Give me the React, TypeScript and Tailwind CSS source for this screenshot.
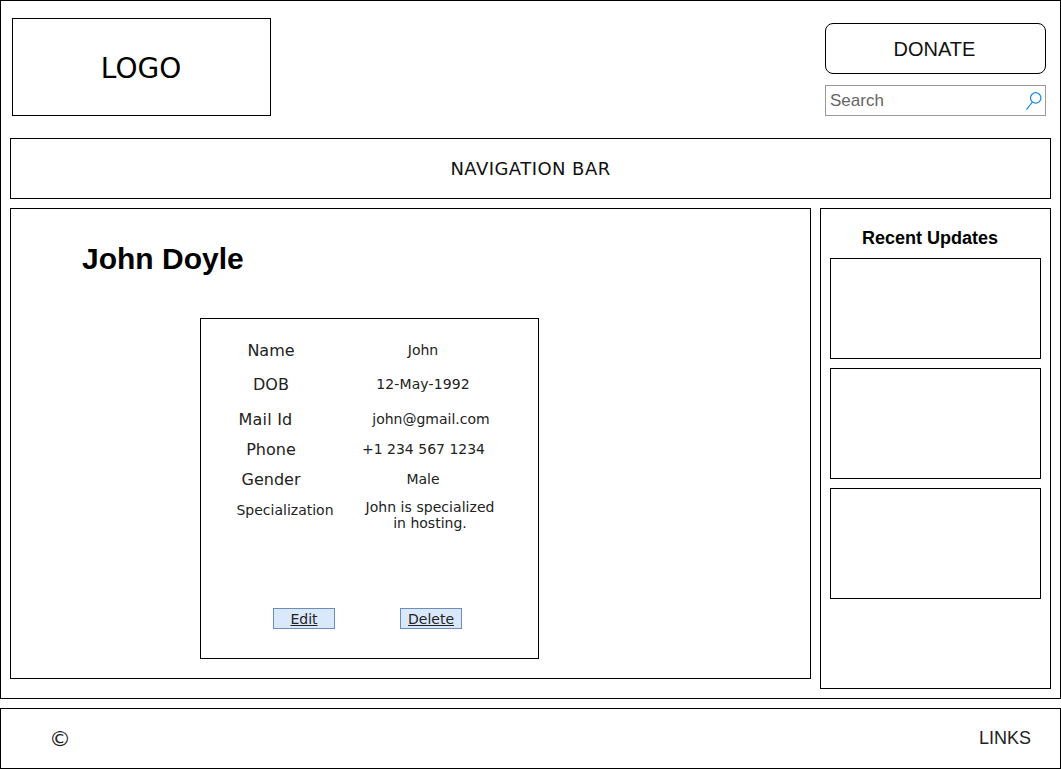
type Field = {
  label: string;
  value: string;
  row: string;
  labelClass: string;
  valueClass: string;
};

const fields: Field[] = [
  { label: "Name", value: "John", row: "h-8", labelClass: "", valueClass: "" },
  { label: "DOB", value: "12-May-1992", row: "h-9", labelClass: "", valueClass: "tracking-[0.1px]" },
  { label: "Mail Id", value: "john@gmail.com", row: "h-[34px]", labelClass: "pr-[11px] tracking-[0.2px]", valueClass: "pl-4" },
  { label: "Phone", value: "+1 234 567 1234", row: "h-[26px]", labelClass: "", valueClass: "pl-px" },
  { label: "Gender", value: "Male", row: "h-[34px]", labelClass: "", valueClass: "" },
];

function SearchIcon() {
  return (
    <svg width="16" height="18" viewBox="0 0 16 18" fill="none" stroke="#1487e8" strokeWidth="1.2">
      <circle cx="9.7" cy="5.9" r="5.2" />
      <path d="M6.4 10 L0.5 17.6" />
    </svg>
  );
}

function Header() {
  return (
    <header className="flex h-[137px] items-start justify-between pt-[17px] pr-[14px] pl-[11px]">
      <div className="flex h-[98px] w-[259px] items-center justify-center border border-black pt-[3px] pr-px font-['DejaVu_Sans',sans-serif] text-[28px]">
        <span>LOGO</span>
      </div>
      <div className="flex w-[221px] flex-col gap-[11px] pt-[5px]">
        <button className="h-[51px] rounded-[8px] border border-black pr-[2px] text-[20px] text-[#111111]">DONATE</button>
        <div className="flex h-[31px] items-center justify-between border border-[#999999] pr-[3px] pl-1 text-[17px] text-[#666666]">
          <span>Search</span>
          <SearchIcon />
        </div>
      </div>
    </header>
  );
}

function ProfileCard() {
  return (
    <section className="mt-[39px] ml-[189px] h-[341px] w-[339px] border border-black pt-[15px] font-['DejaVu_Sans',sans-serif] text-[14px] text-[#222222]">
      {fields.map((f) => (
        <div key={f.label} className={`flex items-center ${f.row}`}>
          <div className={`w-[140px] pt-[2px] text-center text-[16px] ${f.labelClass}`}>{f.label}</div>
          <div className={`w-[164px] text-center ${f.valueClass}`}>{f.value}</div>
        </div>
      ))}
      <div className="flex h-[112px] items-start">
        <div className="w-[168px] pt-[6px] text-center leading-4">Specialization</div>
        <div className="w-[122px] pt-[3px] text-center leading-4 whitespace-nowrap">
          <div className="-mx-5 tracking-[0.05px]">John is specialized</div>
          <div>in hosting.</div>
        </div>
      </div>
      <div className="flex gap-[65px] pl-[72px]">
        <button className="h-[21px] w-[62px] border border-[#6c8ebf] bg-[#dae8fc] pt-px leading-[19px] underline">Edit</button>
        <button className="h-[21px] w-[62px] border border-[#6c8ebf] bg-[#dae8fc] pt-px leading-[19px] underline">Delete</button>
      </div>
    </section>
  );
}

export default function App() {
  return (
    <div className="flex h-[769px] w-[1061px] flex-col gap-[9px] bg-white font-['Liberation_Sans',Arial,sans-serif] text-black">
      <div className="h-[699px] border border-black">
        <Header />
        <nav className="mx-[9px] flex h-[61px] items-center justify-center border border-black font-['DejaVu_Sans',sans-serif] text-[18px] tracking-[0.45px] text-[#111111]">
          <span>NAVIGATION BAR</span>
        </nav>
        <div className="mx-[9px] mt-[9px] flex items-start gap-[9px]">
          <main className="h-[471px] w-[801px] border border-black">
            <h1 className="mt-[30px] ml-[71px] h-10 text-[30px] leading-10 font-bold">John Doyle</h1>
            <ProfileCard />
          </main>
          <aside className="flex h-[481px] w-[231px] flex-col gap-[9px] border border-black px-[9px]">
            <h2 className="h-10 pt-[19px] pr-[11px] text-center text-[18px] leading-5 font-bold">Recent Updates</h2>
            <div className="h-[101px] border border-black" />
            <div className="h-[111px] border border-black" />
            <div className="h-[111px] border border-black" />
          </aside>
        </div>
      </div>
      <footer className="flex h-[61px] items-center justify-between border border-black pr-[29px] pl-[48px] text-[#222222]">
        <span className="font-['DejaVu_Sans',sans-serif] text-[22px]">©</span>
        <span className="text-[18px]">LINKS</span>
      </footer>
    </div>
  );
}
